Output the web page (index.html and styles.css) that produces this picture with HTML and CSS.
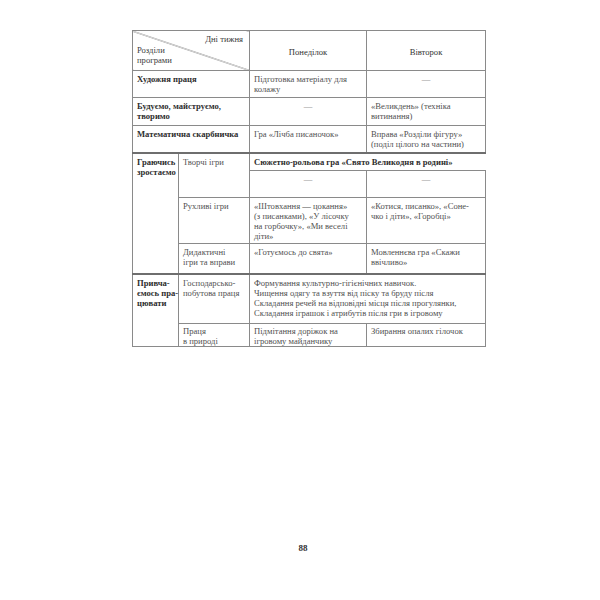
FILE: index.html
```html
<!DOCTYPE html>
<html lang="uk">
<head>
<meta charset="utf-8">
<link rel="stylesheet" href="styles.css">
</head>
<body>
<div class="page">
  <table class="plan">
    <colgroup>
      <col class="c1"><col class="c2"><col class="c3"><col class="c4">
    </colgroup>
    <tr class="r-head">
      <td colspan="2" class="diag">
        <div class="diag-top">Дні тижня</div>
        <div class="diag-bottom">Розділи<br>програми</div>
      </td>
      <td class="head">Понеділок</td>
      <td class="head">Вівторок</td>
    </tr>
    <tr class="r-a">
      <td colspan="2" class="b">Художня праця</td>
      <td class="nw">Підготовка матеріалу для<br>колажу</td>
      <td class="dash">—</td>
    </tr>
    <tr class="r-b">
      <td colspan="2" class="b nw">Будуємо, майструємо,<br>творимо</td>
      <td class="dash">—</td>
      <td class="nw">«Великдень» (техніка<br>витинання)</td>
    </tr>
    <tr class="r-c">
      <td colspan="2" class="b">Математична скарбничка</td>
      <td class="nw">Гра «Лічба писаночок»</td>
      <td class="nw">Вправа «Розділи фігуру»<br>(поділ цілого на частини)</td>
    </tr>
    <tr class="r-d sect">
      <td rowspan="4" class="b nw">Граючись<br>зростаємо</td>
      <td rowspan="2">Творчі ігри</td>
      <td colspan="2" class="b open">Сюжетно-рольова гра «Свято Великодня в родині»</td>
    </tr>
    <tr class="r-e">
      <td class="dash">—</td>
      <td class="dash">—</td>
    </tr>
    <tr class="r-f">
      <td>Рухливі ігри</td>
      <td class="nw">«Штовхання — цокання»<br>(з писанками), «У лісочку<br>на горбочку», «Ми веселі<br>діти»</td>
      <td class="nw">«Котися, писанко», «Соне-<br>чко і діти», «Горобці»</td>
    </tr>
    <tr class="r-g">
      <td class="nw">Дидактичні<br>ігри та вправи</td>
      <td class="nw">«Готуємось до свята»</td>
      <td class="nw">Мовленнєва гра «Скажи<br>ввічливо»</td>
    </tr>
    <tr class="r-h sect">
      <td rowspan="2" class="b nw">Привча-<br>ємось пра-<br>цювати</td>
      <td class="nw">Господарсько-<br>побутова праця</td>
      <td colspan="2" class="nw">Формування культурно-гігієнічних навичок.<br>Чищення одягу та взуття від піску та бруду після<br>Складання речей на відповідні місця після прогулянки,<br>Складання іграшок і атрибутів після гри в ігровому</td>
    </tr>
    <tr class="r-i">
      <td class="nw">Праця<br>в природі</td>
      <td class="nw">Підмітання доріжок на<br>ігровому майданчику</td>
      <td class="nw">Збирання опалих гілочок</td>
    </tr>
  </table>
  <div class="pageno">88</div>
</div>
</body>
</html>
```

FILE: styles.css
```css
html, body {
  margin: 0;
  padding: 0;
  background: #ffffff;
}

.page {
  width: 600px;
  height: 600px;
  padding-top: 30px;
  box-sizing: border-box;
  font-family: "Liberation Serif", "DejaVu Serif", serif;
  color: #505050;
}

.plan {
  margin-left: 132px;
  width: 353px;
  border-collapse: collapse;
  table-layout: fixed;
  font-size: 8.6px;
  line-height: 10px;
}

.c1 { width: 46px; }
.c2 { width: 71px; }
.c3 { width: 117px; }
.c4 { width: 119px; }

.plan td {
  border: 1px solid #8a8a8a;
  vertical-align: top;
  padding: 3px 4px 1px 4px;
  overflow: visible;
  white-space: normal;
}

.plan td.nw {
  white-space: nowrap;
}

.plan td.b {
  font-weight: bold;
  color: #2e2e2e;
}

.plan td.dash {
  text-align: center;
  color: #9a9a9a;
}

.plan td.open {
  border-right: none;
  white-space: nowrap;
  padding-top: 3px;
}

.plan tr.sect > td {
  border-top: 2px solid #6e6e6e;
}

.r-head { height: 40px; }
.r-a { height: 27px; }
.r-b { height: 28px; }
.r-c { height: 27px; }
.r-d { height: 18px; }
.r-e { height: 27px; }
.r-f { height: 46px; }
.r-g { height: 30px; }
.r-h { height: 50px; }
.r-i { height: 22px; }

.r-i > td {
  padding-top: 2px;
  padding-bottom: 0;
}

.plan td.head {
  text-align: center;
  vertical-align: middle;
  color: #333333;
}

.plan td.diag {
  padding: 3px 4px 2px 4px;
  vertical-align: top;
  background: linear-gradient(to top right, transparent calc(50% - 0.6px), #8a8a8a calc(50% - 0.2px), #8a8a8a calc(50% + 0.2px), transparent calc(50% + 0.6px));
  color: #3a3a3a;
}

.diag-top {
  text-align: right;
  padding-right: 2px;
}

.diag-bottom {
  text-align: left;
  margin-top: 1px;
}

.pageno {
  margin-top: 196px;
  padding-left: 6px;
  text-align: center;
  font-family: "Liberation Serif", "DejaVu Serif", serif;
  font-weight: bold;
  font-size: 9px;
  color: #333333;
}
```
